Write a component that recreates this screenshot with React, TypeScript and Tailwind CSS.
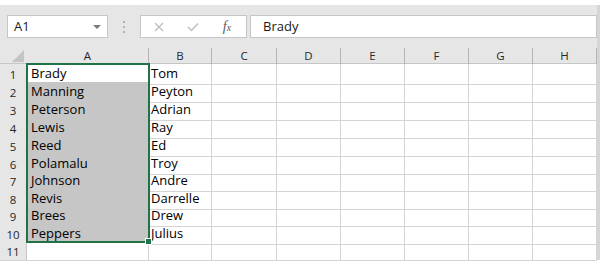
const cols = 'grid grid-cols-[27px_122px_63px_65px_64px_64px_64px_64px_64px]'

const letters = ['A', 'B', 'C', 'D', 'E', 'F', 'G', 'H']

const lastNames = [
  'Brady',
  'Manning',
  'Peterson',
  'Lewis',
  'Reed',
  'Polamalu',
  'Johnson',
  'Revis',
  'Brees',
  'Peppers',
]

const firstNames = [
  'Tom',
  'Peyton',
  'Adrian',
  'Ray',
  'Ed',
  'Troy',
  'Andre',
  'Darrelle',
  'Drew',
  'Julius',
]

const rowHeights = [
  'h-[18px]',
  'h-[18px]',
  'h-[18px]',
  'h-[18px]',
  'h-[18px]',
  'h-[17px]',
  'h-[18px]',
  'h-[17px]',
  'h-[18px]',
  'h-[18px]',
  'h-[18px]',
]

function Toolbar() {
  return (
    <div className="flex h-[40px] items-start bg-[#e6e6e6] pt-[10px] pl-[7px]">
      <div className="flex h-[23px] w-[101px] items-center justify-between border border-[#c6c6c6] bg-white pr-[6px] pl-[6px]">
        <span className="text-[13px] text-[#1a1a1a]">A1</span>
        <svg width="8" height="4" viewBox="0 0 8 4">
          <polygon points="0,0 8,0 4,4" fill="#7a7a7a" />
        </svg>
      </div>
      <div className="flex w-[32px] flex-col items-center gap-[3px] pt-[6px]">
        <span className="size-[2px] bg-[#b3b3b3]" />
        <span className="size-[2px] bg-[#b3b3b3]" />
        <span className="size-[2px] bg-[#b3b3b3]" />
      </div>
      <div className="flex h-[23px] w-[107px] items-center border border-[#c6c6c6] bg-white">
        <div className="flex w-[33px] justify-center pl-[2px]">
          <svg width="10" height="10" viewBox="0 0 10 10">
            <path d="M1 1 L9 9 M9 1 L1 9" stroke="#bdbdbd" strokeWidth="1.3" />
          </svg>
        </div>
        <div className="flex w-[38px] justify-center">
          <svg width="12" height="10" viewBox="0 0 12 10">
            <path d="M1 5 L4.5 8.5 L11 1.5" stroke="#bdbdbd" strokeWidth="1.4" fill="none" />
          </svg>
        </div>
        <div className="flex flex-1 justify-center pr-[4px]">
          <span className="font-['Liberation_Serif',serif] text-[14px] leading-none text-[#5a5a5a] italic">
            f<span className="text-[10px]">x</span>
          </span>
        </div>
      </div>
      <div className="ml-[3px] flex h-[23px] flex-1 items-center border border-[#c6c6c6] bg-white pl-[12px]">
        <span className="text-[13px] text-[#1a1a1a]">Brady</span>
      </div>
    </div>
  )
}

function HeaderRow() {
  return (
    <div className={`${cols} h-[19px] border-b border-[#c6c6c6] bg-[#e6e6e6]`}>
      <div className="flex items-end justify-end pr-[3px] pb-[2px]">
        <svg width="12" height="12" viewBox="0 0 12 12">
          <polygon points="12,0 12,12 0,12" fill="#c4c4c4" />
        </svg>
      </div>
      {letters.map((letter) => (
        <div key={letter} className="flex">
          <span className="flex flex-1 items-center justify-center pt-[2px] text-[11.5px] text-[#262626]">
            {letter}
          </span>
          <span className="h-[16px] w-px self-end bg-[#b4b4b4]" />
        </div>
      ))}
    </div>
  )
}

function SheetRow({ index }: { index: number }) {
  const selected = index >= 1 && index <= 9
  return (
    <div className={`${cols} ${rowHeights[index]}`}>
      <div className="flex items-center justify-center border-r border-b border-r-[#c6c6c6] border-b-[#d6d6d6] bg-[#e6e6e6] pt-px text-[11.5px] text-[#262626]">
        {index + 1}
      </div>
      <div
        className={`flex items-center border-r border-b border-[#d4d4d4] pl-[4px] text-[13px] text-black ${
          selected ? 'bg-[#c6c6c6]' : 'bg-white'
        }`}
      >
        {lastNames[index]}
      </div>
      <div className="flex items-center border-r border-b border-[#d4d4d4] pl-[2px] text-[13px] text-black">
        {firstNames[index]}
      </div>
      {letters.slice(2).map((letter) => (
        <div key={letter} className="border-r border-b border-[#d4d4d4]" />
      ))}
    </div>
  )
}

export default function App() {
  return (
    <div className="h-[270px] w-[604px] overflow-hidden bg-white font-['Open_Sans',sans-serif]">
      <div className="h-[5px]" />
      <div className="w-[600px] border-r-[3px] border-[#d6d6d6]">
        <Toolbar />
        <HeaderRow />
        <div className="relative">
          {rowHeights.map((_, index) => (
            <SheetRow key={index} index={index} />
          ))}
          <div className="absolute top-[-1px] left-[26px] h-[180px] w-[124px] border-2 border-[#217346]" />
          <div className="absolute top-[174px] left-[145px] size-[7px] border border-white bg-[#217346]" />
        </div>
      </div>
    </div>
  )
}
